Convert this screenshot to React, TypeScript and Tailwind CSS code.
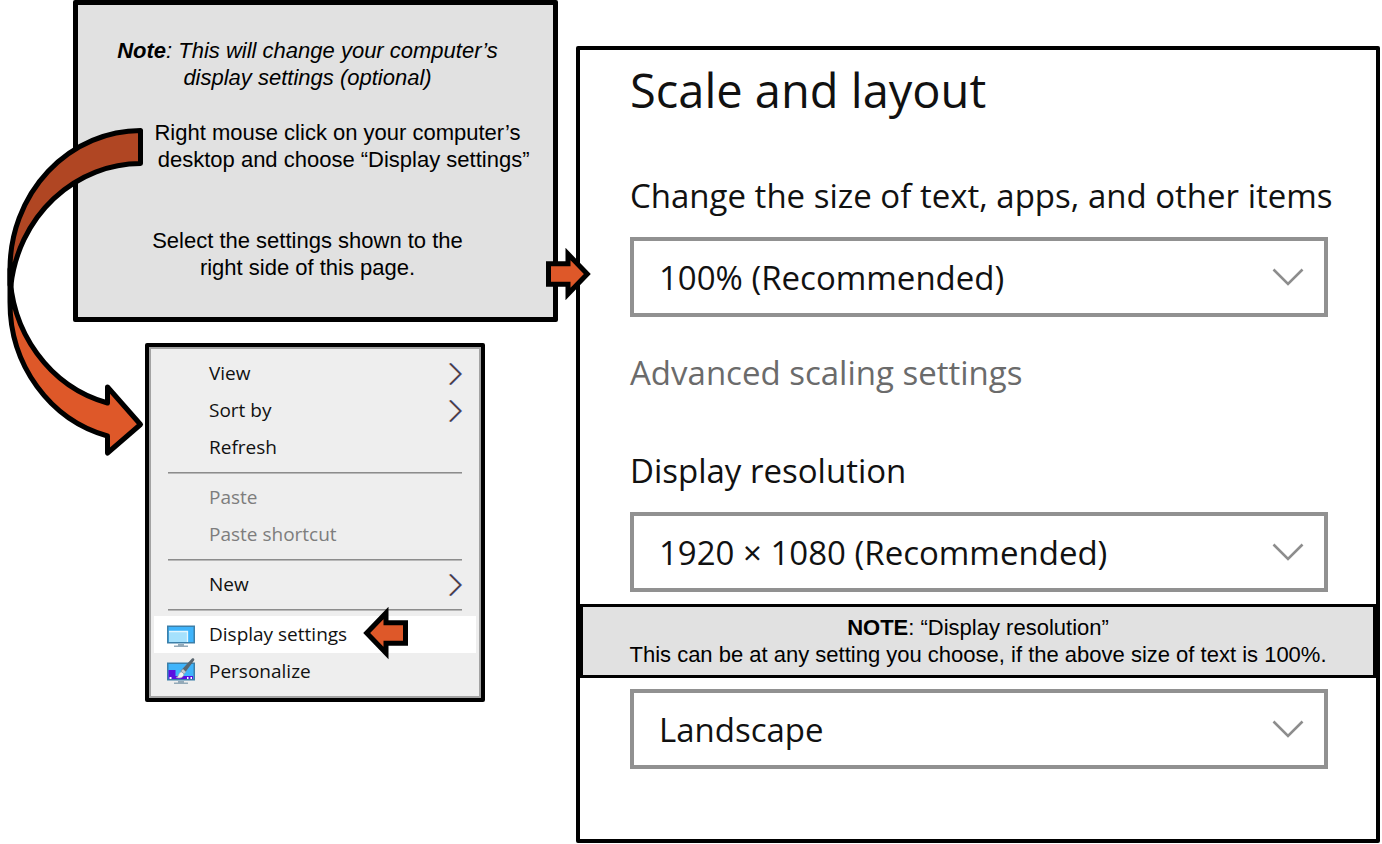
import type { ReactNode } from "react";

type ChoiceProps = { id: string; label: string; value: string; hiddenLabel?: boolean };

function Choice({ id, label, value, hiddenLabel }: ChoiceProps) {
  return (
    <div className="flex flex-col">
      {!hiddenLabel && (
        <label htmlFor={id} className="mb-4 whitespace-nowrap text-[33px] leading-[50px]">
          {label}
        </label>
      )}
      <div className="relative mr-12 flex">
        <select
          id={id}
          aria-label={hiddenLabel ? label : undefined}
          className="h-20 w-full appearance-none border-4 border-[#919191] bg-white pl-[25px] pr-16 pt-[2px] text-[33px] text-[#111]"
        >
          <option>{value}</option>
        </select>
        <svg
          aria-hidden="true"
          viewBox="0 0 32 18"
          className="pointer-events-none absolute right-6 top-[31px] h-[18px] w-8"
          fill="none"
          stroke="#8d8d8d"
          strokeWidth="2.6"
        >
          <path d="M1.5 1.5 L16 16 L30.5 1.5" />
        </svg>
      </div>
    </div>
  );
}

type ItemProps = {
  children: ReactNode;
  icon?: ReactNode;
  submenu?: boolean;
  disabled?: boolean;
  active?: boolean;
};

function Item({ children, icon, submenu, disabled, active }: ItemProps) {
  return (
    <button
      type="button"
      disabled={disabled}
      className={
        "flex h-[37px] w-full items-center pl-[13px] pr-[13px] text-left text-[19px] " +
        (active ? "bg-white " : "") +
        (disabled ? "text-[#7d7d7d]" : "text-[#111]")
      }
    >
      <span className="flex w-[42px] shrink-0">{icon}</span>
      <span className="flex-1 whitespace-nowrap">{children}</span>
      {submenu && (
        <svg aria-hidden="true" viewBox="0 0 16 24" className="h-6 w-4" fill="none" strokeWidth="1.2">
          <path d="M2 1.5 L12.5 12 L2 22.5" stroke="#e8b070" />
          <path d="M4 1.5 L14.5 12 L4 22.5" stroke="#3f8fee" />
          <path d="M3 1.5 L13.5 12 L3 22.5" stroke="#4a2a3a" />
        </svg>
      )}
    </button>
  );
}

function Separator() {
  return (
    <div role="separator" className="px-[14px] py-[6px]">
      <div className="h-px bg-[#8c8c8c] shadow-[0_1px_0_#b8b8b8]" />
    </div>
  );
}

function MonitorIcon() {
  return (
    <svg aria-hidden="true" viewBox="0 0 28 28" className="h-7 w-7">
      <path d="M11 23h6v1.500h4v1.500H7V24.500h4z" fill="#93a9b8" />
      <rect x="0.750" y="5.250" width="26.500" height="16.500" fill="#3fb4fb" stroke="#3d7fa8" strokeWidth="1.500" />
      <path d="M2 11h18v10H2z" fill="#a5e1fd" />
      <path d="M2 10.500h18.500V21" fill="none" stroke="#e4f7ff" strokeWidth="1.300" />
    </svg>
  );
}

function PersonalizeIcon() {
  return (
    <svg aria-hidden="true" viewBox="0 0 28 28" className="h-7 w-7">
      <path d="M11 23h6v1.500h4v1.500H7V24.500h4z" fill="#93a9b8" />
      <rect x="0.750" y="5.250" width="26.500" height="16.500" fill="#3fb4fb" stroke="#3d7fa8" strokeWidth="1.500" />
      <path d="M1.500 12h7v6H26v3H1.500z" fill="#5a0fe0" />
      <path d="M2.500 19h2v2h-2zM20 19h1.500v2H20zM23.500 19H25v2h-1.500z" fill="#fff" />
      <path d="M9 19.500c3-.5 2-3 4-5 2-1.500 4.500.5 3.500 3-1 2.500-4 3-7.500 2z" fill="#f3f3f3" stroke="#a9a9a9" strokeWidth="0.600" />
      <path d="M13.500 13 25 .5c1.500-1 3 .5 2 2L17 16z" fill="#59666f" />
      <path d="M14 13l3 3 2-2-3-3z" fill="#c3c9cd" />
    </svg>
  );
}

function CurvedArrow() {
  return (
    <svg
      aria-hidden="true"
      viewBox="0 120 150 340"
      className="absolute left-0 top-[120px] h-[340px] w-[150px]"
      stroke="#000"
      strokeWidth="5"
      strokeLinejoin="round"
    >
      <path
        d="M140.500 130.500 A131 138 0 0 0 10 269 V285 L10.900 285.500 A131 138 0 0 1 140.500 163.500 Z"
        fill="#b04623"
      />
      <path
        d="M10 269 A131 138 0 0 0 107.500 403 V387 L140.500 424.500 L107.500 453 V436 A131 138 0 0 1 10 302 Z"
        fill="#de5829"
      />
    </svg>
  );
}

function BlockArrow({ className }: { className: string }) {
  return (
    <svg
      aria-hidden="true"
      viewBox="0 0 46 54"
      className={className}
      fill="#de5829"
      stroke="#000"
      strokeWidth="5"
    >
      <path d="M2.500 16.700 H22 V7 L41.300 27 L22 47 V37.300 H2.500 Z" />
    </svg>
  );
}

export default function App() {
  return (
    <main className="flex items-start bg-white pr-[2px] font-['Liberation_Sans',Arial,sans-serif] text-black">
      <div className="relative flex w-[576px] shrink-0 flex-col pl-[73px]">
        <section className="mr-[18px] rounded-[2px] border-[5px] border-black bg-[#e1e1e1] pb-9 pl-[18px] pr-[18px] pt-8 text-[22px] leading-[27px]">
          <p className="mr-4 text-center italic">
            <strong>Note</strong>: This will change your computer’s
            <br />
            display settings (optional)
          </p>
          <p className="mt-7 whitespace-nowrap pl-[44px] text-center">
            Right mouse click on your computer’s
            <br />
            {"\u00a0\u00a0"}desktop and choose “Display settings”
          </p>
          <p className="mr-4 mt-[54px] text-center">
            Select the settings shown to the
            <br />
            right side of this page.
          </p>
        </section>

        <nav
          aria-label="Desktop menu"
          className="relative ml-[72px] mt-[21px] w-[340px] rounded-[2px] border-[4px] border-black font-['Open_Sans','Noto_Sans',sans-serif]"
        >
          <div className="border-2 border-[#a3a3a3] bg-[#eee] px-[3px] py-[6px]">
            <Item submenu>View</Item>
            <Item submenu>Sort by</Item>
            <Item>Refresh</Item>
            <Separator />
            <Item disabled>Paste</Item>
            <Item disabled>Paste shortcut</Item>
            <Separator />
            <Item submenu>New</Item>
            <Separator />
            <Item active icon={<MonitorIcon />}>
              Display settings
            </Item>
            <Item icon={<PersonalizeIcon />}>Personalize</Item>
          </div>
          <BlockArrow className="absolute bottom-[38px] right-[73px] h-[54px] w-[46px] rotate-180" />
        </nav>

        <CurvedArrow />
        <BlockArrow className="absolute right-[-16px] top-[247px] z-10 h-[54px] w-[46px]" />
      </div>

      <section className="mt-[46px] min-w-0 flex-1 rounded-[2px] border-[4px] border-black pb-[70px] font-['Open_Sans','Noto_Sans',sans-serif] text-[#111]">
        <div className="pl-[50px]">
          <h1 className="pt-2 text-[47px] leading-[64px]">Scale and layout</h1>
          <div className="mt-[49px]">
            <Choice id="scale" label="Change the size of text, apps, and other items" value="100% (Recommended)" />
          </div>
          <a href="#advanced" className="mt-[31px] block text-[33px] leading-[50px] text-[#6b6b6b]">
            Advanced scaling settings
          </a>
          <div className="mt-12">
            <Choice id="resolution" label="Display resolution" value="1920 × 1080 (Recommended)" />
          </div>
        </div>
        <p className="mb-[11px] mt-3 border-[3px] border-black bg-[#e1e1e1] py-[7px] text-center font-['Liberation_Sans',Arial,sans-serif] text-[22px] leading-[27px] text-black">
          <strong>NOTE</strong>: “Display resolution”
          <br />
          This can be at any setting you choose, if the above size of text is 100%.
        </p>
        <div className="pl-[50px]">
          <Choice id="orientation" label="Display orientation" value="Landscape" hiddenLabel />
        </div>
      </section>
    </main>
  );
}
